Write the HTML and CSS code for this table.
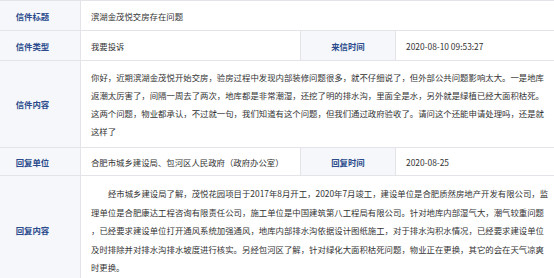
FILE: index.html
```html
<!DOCTYPE html>
<html lang="zh-CN">
<head>
<meta charset="utf-8">
<title>信件详情</title>
<link rel="stylesheet" href="styles.css">
</head>
<body>
<table class="letter">
  <colgroup>
    <col class="c-label">
    <col class="c-value">
    <col class="c-label2">
    <col class="c-rest">
  </colgroup>
  <tr class="row-s">
    <th class="label">信件标题</th>
    <td class="value" colspan="3">滨湖金茂悦交房存在问题</td>
  </tr>
  <tr class="row-s">
    <th class="label">信件类型</th>
    <td class="value">我要投诉</td>
    <th class="label">来信时间</th>
    <td class="value">2020-08-10 09:53:27</td>
  </tr>
  <tr>
    <th class="label">信件内容</th>
    <td class="value text letter-body" colspan="3">
      <span class="ln">你好，近期滨湖金茂悦开始交房，验房过程中发现内部装修问题很多，就不仔细说了，但外部公共问题影响太大。一是地库</span>
      <span class="ln">返潮太厉害了，间隔一周去了两次，地库都是非常潮湿，还挖了明的排水沟，里面全是水，另外就是绿植已经大面积枯死。</span>
      <span class="ln">这两个问题，物业都承认，不过就一句，我们知道有这个问题，但我们通过政府验收了。请问这个还能申请处理吗，还是就</span>
      <span class="ln last">这样了</span>
    </td>
  </tr>
  <tr class="row-m">
    <th class="label">回复单位</th>
    <td class="value">合肥市城乡建设局、包河区人民政府（政府办公室）</td>
    <th class="label">回复时间</th>
    <td class="value">2020-08-25</td>
  </tr>
  <tr>
    <th class="label">回复内容</th>
    <td class="value text reply-body" colspan="3">
      <span class="ln indent">经市城乡建设局了解，茂悦花园项目于2017年8月开工，2020年7月竣工，建设单位是合肥质然房地产开发有限公司，监</span>
      <span class="ln">理单位是合肥康达工程咨询有限责任公司，施工单位是中国建筑第八工程局有限公司。针对地库内部湿气大，潮气较重问题</span>
      <span class="ln">，已经要求建设单位打开通风系统加强通风，地库内部排水沟依据设计图纸施工，对于排水沟积水情况，已经要求建设单位</span>
      <span class="ln">及时排除并对排水沟排水坡度进行核实。另经包河区了解，针对绿化大面积枯死问题，物业正在更换，其它的会在天气凉爽</span>
      <span class="ln last">时更换。</span>
    </td>
  </tr>
</table>
</body>
</html>
```

FILE: styles.css
```css
html, body {
  margin: 0;
  padding: 0;
  background: #ffffff;
  overflow: hidden;
}

body {
  font-family: "Noto Sans CJK SC", "Microsoft YaHei", sans-serif;
  font-size: 8.4px;
  color: #333333;
}

.letter {
  border-collapse: collapse;
  table-layout: fixed;
  width: 571px;
  margin-left: -16px;
}

.c-label { width: 96px; }
.c-value { width: 220px; }
.c-label2 { width: 95px; }

.letter th,
.letter td {
  border: 1px solid #e2e4e8;
  vertical-align: middle;
}

.letter tr:first-child th,
.letter tr:first-child td {
  border-top-color: #e2e4e8;
}

.label {
  background: #f5f7fb;
  color: #2b4b8c;
  font-weight: 700;
  text-align: center;
  padding: 0;
}

.value {
  text-align: left;
  padding: 0 10px;
  white-space: nowrap;
}

.row-s { height: 30px; }
.row-m { height: 28px; }

.text {
  white-space: normal;
}

.letter-body {
  padding: 7px 10px 7px 10px;
  line-height: 18px;
}

.reply-body {
  padding: 8px 10px 8px 10px;
  line-height: 18.6px;
}

.ln {
  display: block;
  text-align: justify;
  text-align-last: justify;
  white-space: nowrap;
}

.ln.last {
  text-align-last: left;
}

.ln.indent {
  padding-left: 17px;
}
```
